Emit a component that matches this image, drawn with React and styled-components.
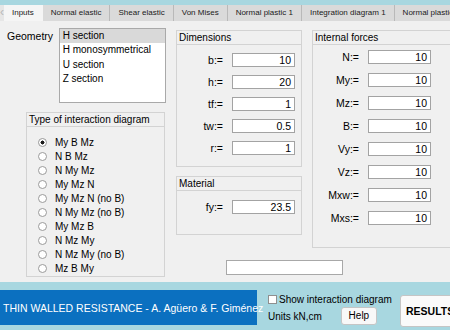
import styled, { createGlobalStyle } from "styled-components";

const GlobalStyle = createGlobalStyle`
  html, body {
    margin: 0;
    padding: 0;
    overflow: hidden;
    background: #f0f0f0;
  }
  body {
    font-family: "Liberation Sans", Arial, sans-serif;
    font-size: 10px;
    color: #000;
  }
`;

const tabs = [
  "Inputs",
  "Normal elastic",
  "Shear elastic",
  "Von Mises",
  "Normal plastic 1",
  "Integration diagram 1",
  "Normal plastic 2",
];

const sections = ["H section", "H monosymmetrical", "U section", "Z section"];

const diagrams = [
  "My B Mz",
  "N B Mz",
  "N My Mz",
  "My Mz N",
  "My Mz N (no B)",
  "N My Mz (no B)",
  "My Mz B",
  "N Mz My",
  "N Mz My (no B)",
  "Mz B My",
];

const dimensions = [
  ["b:=", "10"],
  ["h:=", "20"],
  ["tf:=", "1"],
  ["tw:=", "0.5"],
  ["r:=", "1"],
];

const forces = [
  ["N:=", "10"],
  ["My:=", "10"],
  ["Mz:=", "10"],
  ["B:=", "10"],
  ["Vy:=", "10"],
  ["Vz:=", "10"],
  ["Mxw:=", "10"],
  ["Mxs:=", "10"],
];

function App() {
  return (
    <>
      <GlobalStyle />
      <Window>
        <TopStrip />
        <TabBar>
          <ScrollArrow>‹</ScrollArrow>
          {tabs.map((t, i) => (
            <Tab key={t} active={i === 0}>
              {t}
            </Tab>
          ))}
        </TabBar>

        <Content>
          <LeftColumn>
            <GeometryRow>
              <GeometryLabel>Geometry</GeometryLabel>
              <ListBox>
                {sections.map((s, i) => (
                  <ListItem key={s} selected={i === 0}>
                    {s}
                  </ListItem>
                ))}
              </ListBox>
            </GeometryRow>
            <TypePanel>
              <PanelTitle>Type of interaction diagram</PanelTitle>
              <RadioList>
                {diagrams.map((d, i) => (
                  <RadioRow key={d}>
                    <Radio checked={i === 0} />
                    <span>{d}</span>
                  </RadioRow>
                ))}
              </RadioList>
            </TypePanel>
          </LeftColumn>

          <MiddleColumn>
            <Panel h={137}>
              <PanelTitle>Dimensions</PanelTitle>
              <FieldList top={8} gap={8}>
                {dimensions.map(([label, value]) => (
                  <FieldRow key={label}>
                    <FieldLabel>{label}</FieldLabel>
                    <NumberBox>{value}</NumberBox>
                  </FieldRow>
                ))}
              </FieldList>
            </Panel>
            <Panel h={59}>
              <PanelTitle>Material</PanelTitle>
              <FieldList top={9} gap={8}>
                <FieldRow>
                  <FieldLabel>fy:=</FieldLabel>
                  <NumberBox>23.5</NumberBox>
                </FieldRow>
              </FieldList>
            </Panel>
          </MiddleColumn>

          <RightColumn>
            <Panel h={218}>
              <PanelTitle>Internal forces</PanelTitle>
              <FieldList top={5} gap={9}>
                {forces.map(([label, value]) => (
                  <FieldRow key={label}>
                    <FieldLabel>{label}</FieldLabel>
                    <NumberBox>{value}</NumberBox>
                  </FieldRow>
                ))}
              </FieldList>
            </Panel>
          </RightColumn>

          <StatusBox />
        </Content>

        <BottomBar>
          <Banner>THIN WALLED RESISTANCE - A. Agüero &amp; F. Giménez</Banner>
          <Options>
            <CheckRow>
              <CheckBox />
              <span>Show interaction diagram</span>
            </CheckRow>
            <UnitsRow>
              <span>Units kN,cm</span>
              <HelpButton>Help</HelpButton>
            </UnitsRow>
          </Options>
          <ResultsButton>RESULTS</ResultsButton>
        </BottomBar>
      </Window>
    </>
  );
}

const Window = styled.div`
  width: 450px;
  height: 330px;
  display: flex;
  flex-direction: column;
  overflow: hidden;
  background: #f0f0f0;
`;

const TopStrip = styled.div`
  height: 5px;
  background: #a8d7e0;
`;

const TabBar = styled.div`
  height: 16px;
  display: flex;
  align-items: stretch;
  background: #dcdcdc;
  white-space: nowrap;
`;

const ScrollArrow = styled.div`
  width: 8px;
  color: #b8b8b8;
  font-size: 12px;
  line-height: 15px;
  text-align: center;
  background: #e6e6e6;
`;

const Tab = styled.div`
  flex: none;
  padding: 0 8px;
  font-size: 8px;
  line-height: 16px;
  background: ${(p) => (p.active ? "#f5f5f5" : "#dadada")};
  border-right: 1px solid ${(p) => (p.active ? "#f5f5f5" : "#b9b9b9")};
  color: #1a1a1a;
`;

const Content = styled.div`
  flex: 1;
  display: grid;
  grid-template-columns: 159px 126px 145px;
  grid-template-rows: auto 1fr;
  column-gap: 10px;
  row-gap: 12px;
  align-items: start;
  padding: 7px 0 0 7px;
`;

const LeftColumn = styled.div`
  grid-row: 1 / span 2;
  display: flex;
  flex-direction: column;
`;

const GeometryRow = styled.div`
  display: flex;
  align-items: flex-start;
`;

const GeometryLabel = styled.div`
  width: 52px;
  font-size: 10.5px;
  line-height: 16px;
`;

const ListBox = styled.div`
  width: 106px;
  height: 73px;
  border: 1px solid #a9a9a9;
  background: #fff;
`;

const ListItem = styled.div`
  height: 14.4px;
  line-height: 14.4px;
  padding-left: 3px;
  background: ${(p) => (p.selected ? "#d9d9d9" : "transparent")};
`;

const Panel = styled.div`
  box-sizing: border-box;
  height: ${(p) => p.h}px;
  margin-top: 2px;
  border: 1px solid #d3d3d3;
  background: #f0f0f0;
`;

const TypePanel = styled(Panel)`
  width: 139px;
  height: 165px;
  margin: 9px 0 0 19px;
`;

const PanelTitle = styled.div`
  height: 13px;
  line-height: 13px;
  padding-left: 2px;
  border-bottom: 1px solid #d3d3d3;
`;

const RadioList = styled.div`
  padding: 8px 0 0 11px;
  display: flex;
  flex-direction: column;
`;

const RadioRow = styled.div`
  display: flex;
  align-items: center;
  gap: 8px;
  height: 14.1px;
`;

const Radio = styled.span`
  flex: none;
  box-sizing: border-box;
  width: 9px;
  height: 9px;
  border-radius: 50%;
  border: 1px solid #9a9a9a;
  background: ${(p) =>
    p.checked
      ? "radial-gradient(circle, #1a1a1a 0 1.8px, #fff 2.2px)"
      : "#fff"};
`;

const MiddleColumn = styled.div`
  display: flex;
  flex-direction: column;
  gap: 7px;
`;

const RightColumn = styled.div`
  display: flex;
  flex-direction: column;
`;

const FieldList = styled.div`
  display: flex;
  flex-direction: column;
  gap: ${(p) => p.gap}px;
  padding-top: ${(p) => p.top}px;
`;

const FieldRow = styled.div`
  display: flex;
  align-items: center;
`;

const FieldLabel = styled.div`
  width: 46px;
  margin-right: 9px;
  text-align: right;
  font-size: 10.5px;
`;

const NumberBox = styled.div`
  box-sizing: border-box;
  width: 63px;
  height: 14px;
  line-height: 12px;
  padding-right: 3px;
  text-align: right;
  font-size: 10.5px;
  background: #fff;
  border: 1px solid #a3a3a3;
`;

const StatusBox = styled.div`
  grid-column: 2 / span 2;
  box-sizing: border-box;
  width: 117px;
  height: 15px;
  margin-left: 50px;
  background: #fff;
  border: 1px solid #a8a8a8;
`;

const BottomBar = styled.div`
  height: 48px;
  display: flex;
  align-items: flex-start;
  background: #a8d7e0;
`;

const Banner = styled.div`
  flex: none;
  width: 257px;
  height: 35px;
  margin-top: 8px;
  padding-left: 3px;
  box-sizing: border-box;
  display: flex;
  align-items: center;
  background: #0b70c0;
  color: #fff;
  font-size: 10.5px;
  white-space: nowrap;
`;

const Options = styled.div`
  flex: none;
  width: 122px;
  margin-left: 11px;
  padding-top: 12px;
  display: flex;
  flex-direction: column;
  white-space: nowrap;
`;

const CheckRow = styled.div`
  display: flex;
  align-items: center;
  gap: 2px;
  height: 11px;
`;

const CheckBox = styled.span`
  flex: none;
  box-sizing: border-box;
  width: 9px;
  height: 9px;
  background: #fff;
  border: 1px solid #8f8f8f;
`;

const UnitsRow = styled.div`
  display: flex;
  align-items: center;
  gap: 19px;
  margin-top: 2px;
`;

const HelpButton = styled.div`
  box-sizing: border-box;
  width: 36px;
  height: 18px;
  line-height: 16px;
  text-align: center;
  background: #f8f8f8;
  border: 1px solid #c5c5c5;
  border-radius: 3px;
`;

const ResultsButton = styled.div`
  box-sizing: border-box;
  flex: none;
  width: 60px;
  height: 32px;
  margin: 13px 0 0 10px;
  padding-left: 5px;
  line-height: 30px;
  font-weight: bold;
  font-size: 10.5px;
  background: #fafafa;
  border: 1px solid #c5c5c5;
  border-radius: 3px;
`;

export default App;
